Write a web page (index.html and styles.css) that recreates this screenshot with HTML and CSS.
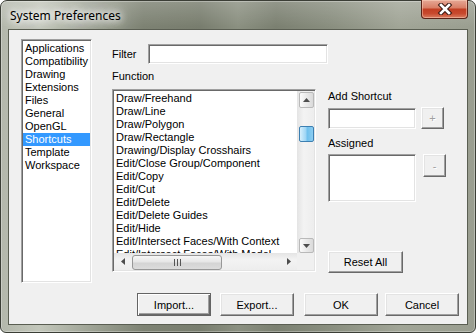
FILE: index.html
```html
<!DOCTYPE html>
<html lang="en">
<head>
  <meta charset="UTF-8">
  <link rel="stylesheet" href="styles.css">
  <title>System Preferences</title>
</head>
<body>
  <div class="window">
    <div class="titlebar">
      <span class="title">System Preferences</span>
      <div class="close-btn">
        <svg width="16" height="12" viewBox="0 0 16 12">
          <path d="M4 2 L12 10 M12 2 L4 10" stroke="#3a1a14" stroke-width="4.6" stroke-linecap="square" fill="none"/>
          <path d="M4 2 L12 10 M12 2 L4 10" stroke="#ffffff" stroke-width="2.6" stroke-linecap="square" fill="none"/>
        </svg>
      </div>
    </div>

    <div class="client">
      <div class="main">
        <div class="listbox sunken pages">
          <div class="item">Applications</div>
          <div class="item">Compatibility</div>
          <div class="item">Drawing</div>
          <div class="item">Extensions</div>
          <div class="item">Files</div>
          <div class="item">General</div>
          <div class="item">OpenGL</div>
          <div class="item selected">Shortcuts</div>
          <div class="item">Template</div>
          <div class="item">Workspace</div>
        </div>

        <div class="content">
          <div class="filter-row">
            <span class="filter-label">Filter</span>
            <div class="sunken filter-box"></div>
          </div>

          <div class="lower">
            <div class="func-col">
              <div class="label">Function</div>
              <div class="sunken functions">
                <div class="func-items">
                  <div class="item">Draw/Freehand</div>
                  <div class="item">Draw/Line</div>
                  <div class="item">Draw/Polygon</div>
                  <div class="item">Draw/Rectangle</div>
                  <div class="item">Drawing/Display Crosshairs</div>
                  <div class="item">Edit/Close Group/Component</div>
                  <div class="item">Edit/Copy</div>
                  <div class="item">Edit/Cut</div>
                  <div class="item">Edit/Delete</div>
                  <div class="item">Edit/Delete Guides</div>
                  <div class="item">Edit/Hide</div>
                  <div class="item">Edit/Intersect Faces/With Context</div>
                  <div class="item">Edit/Intersect Faces/With Model</div>
                </div>
                <div class="vscroll">
                  <div class="sb-btn sb-up">
                    <svg width="7" height="4" viewBox="0 0 7 4"><path d="M0 4 L3.5 0 L7 4 Z" fill="#4d4d4d"/></svg>
                  </div>
                  <div class="vthumb"></div>
                  <div class="sb-btn sb-down">
                    <svg width="7" height="4" viewBox="0 0 7 4"><path d="M0 0 L3.5 4 L7 0 Z" fill="#4d4d4d"/></svg>
                  </div>
                </div>
                <div class="hscroll">
                  <div class="harrow">
                    <svg width="4" height="7" viewBox="0 0 4 7"><path d="M4 0 L0 3.5 L4 7 Z" fill="#4d4d4d"/></svg>
                  </div>
                  <div class="hthumb">
                    <svg width="7" height="7" viewBox="0 0 7 7"><path d="M0.5 0 V7 M3.5 0 V7 M6.5 0 V7" stroke="#555" stroke-width="1"/></svg>
                  </div>
                  <div class="harrow right">
                    <svg width="4" height="7" viewBox="0 0 4 7"><path d="M0 0 L4 3.5 L0 7 Z" fill="#4d4d4d"/></svg>
                  </div>
                </div>
                <div class="corner"></div>
              </div>
            </div>

            <div class="side-col">
              <div class="label">Add Shortcut</div>
              <div class="input-row">
                <div class="sunken shortcut-box"></div>
                <div class="btn small">+</div>
              </div>
              <div class="label assigned-label">Assigned</div>
              <div class="input-row assigned-row">
                <div class="sunken assigned-box"></div>
                <div class="btn small minus">-</div>
              </div>
              <div class="btn reset">Reset All</div>
            </div>
          </div>
        </div>
      </div>

      <div class="actions">
        <div class="btn action default">Import...</div>
        <div class="btn action">Export...</div>
        <div class="btn action ok">OK</div>
        <div class="btn action cancel">Cancel</div>
      </div>
    </div>
  </div>
</body>
</html>
```

FILE: styles.css
```css
body {
  margin: 0;
  background: #ffffff;
  font-family: "Liberation Sans", Arial, sans-serif;
  font-size: 11px;
  color: #000;
}

/* window frame */
.window {
  width: 476px;
  height: 333px;
  box-sizing: border-box;
  border: 1px solid #3b3e36;
  border-radius: 7px 7px 6px 6px;
  padding: 0 7px 7px;
  display: flex;
  flex-direction: column;
  background:
    linear-gradient(rgba(255, 255, 255, 0.18), rgba(255, 255, 255, 0) 26px),
    linear-gradient(90deg, #b3b7ab 0%, #c3c7bb 8%, #9ba092 20%, #7d8273 30%, #787d6e 42%, #8b9081 50%, #7b8071 58%, #8a8f80 70%, #a1a597 84%, #9a9e90 100%);
  box-shadow: inset 0 0 0 1px rgba(255, 255, 255, 0.3);
}

.titlebar {
  height: 28px;
  display: flex;
  justify-content: space-between;
  align-items: flex-start;
}
.title {
  margin: 7px 0 0 2px;
  font-family: "Noto Sans", "Open Sans", sans-serif;
  font-size: 12px;
  line-height: 15px;
  color: #000;
  text-shadow: 0 0 6px #fff, 0 0 10px #fff, 0 0 14px #fff, 0 0 18px #fff;
}
.close-btn {
  width: 45px;
  height: 18px;
  margin: -1px 0 0 0;
  border: 1px solid #5a2318;
  border-top: none;
  border-radius: 0 0 4px 4px;
  display: flex;
  align-items: center;
  justify-content: center;
  background: linear-gradient(#e6a896 0%, #d98068 42%, #c23f24 52%, #c8492e 75%, #d97c60 100%);
  box-shadow: inset 0 0 0 1px rgba(255, 220, 200, 0.45);
}

/* client area */
.client {
  flex: 1;
  border: 1px solid #5a5e52;
  background: #f0f0f0;
  padding: 9px 8px 8px 12px;
  display: flex;
  flex-direction: column;
}
.main {
  height: 244px;
  display: flex;
}

.sunken {
  box-sizing: border-box;
  background: #fff;
  border: 1px solid;
  border-color: #a0a0a0 #ffffff #ffffff #a0a0a0;
  box-shadow: inset 1px 1px 0 #696969, inset -1px -1px 0 #e3e3e3;
}

.item {
  line-height: 13px;
  padding-left: 2px;
  white-space: nowrap;
}

.pages {
  width: 71px;
  height: 244px;
  padding: 2px 1px 1px;
}
.pages .selected {
  background: #3399ff;
  color: #fff;
}

.content {
  margin-left: 20px;
}
.filter-row {
  margin-top: 5px;
  height: 20px;
  display: flex;
  align-items: center;
}
.filter-label {
  width: 36px;
}
.filter-box {
  width: 180px;
  height: 20px;
}

.lower {
  display: flex;
}
.label {
  line-height: 13px;
  white-space: nowrap;
}
.func-col {
  width: 204px;
}
.func-col .label {
  margin-top: 6px;
}

/* function list with scrollbars */
.functions {
  margin-top: 6px;
  height: 183px;
  padding: 1px;
  display: grid;
  grid-template-columns: 1fr 17px;
  grid-template-rows: 1fr 17px;
}
.func-items {
  overflow: hidden;
  padding-top: 1px;
}
.vscroll {
  display: flex;
  flex-direction: column;
  background: linear-gradient(90deg, #e4e4e4, #f3f3f3 40%, #ededed);
}
.sb-btn {
  box-sizing: border-box;
  margin-left: 2px;
  width: 15px;
  border: 1px solid #b9b9b9;
  border-radius: 2px;
  background: linear-gradient(90deg, #fbfbfb, #e9e9e9 50%, #dadada);
  display: flex;
  align-items: center;
  justify-content: center;
}
.sb-up {
  height: 16px;
  margin-top: 1px;
}
.sb-down {
  height: 15px;
  margin-top: auto;
}
.vthumb {
  box-sizing: border-box;
  margin: 18px 0 0 2px;
  width: 15px;
  height: 16px;
  border: 1px solid #3c7fb1;
  border-radius: 2px;
  background: linear-gradient(90deg, #d6effc, #9dd5f5 45%, #6fc0ed 55%, #8ccdf1);
}
.hscroll {
  display: flex;
  align-items: center;
  background: linear-gradient(#e4e4e4, #f3f3f3 40%, #ededed);
}
.harrow {
  width: 17px;
  display: flex;
  justify-content: center;
}
.harrow.right {
  margin-left: auto;
}
.hthumb {
  box-sizing: border-box;
  margin: 2px 0 0 1px;
  width: 90px;
  height: 15px;
  border: 1px solid #979797;
  border-radius: 3px;
  background: linear-gradient(#f7f7f7, #e6e6e6 45%, #d4d4d4 55%, #dcdcdc);
  display: flex;
  align-items: center;
  justify-content: center;
}
.corner {
  background: #f0f0f0;
}

/* right column */
.side-col {
  margin-left: 12px;
  display: flex;
  flex-direction: column;
}
.side-col .label {
  margin-top: 26px;
}
.side-col .assigned-label {
  margin-top: 8px;
}
.input-row {
  margin-top: 5px;
  display: flex;
  align-items: flex-start;
  gap: 5px;
}
.assigned-row {
  margin-top: 4px;
  gap: 7px;
}
.shortcut-box {
  width: 88px;
  height: 21px;
}
.assigned-box {
  width: 88px;
  height: 48px;
}

/* classic raised buttons */
.btn {
  box-sizing: border-box;
  background: #f0f0f0;
  border: 1px solid;
  border-color: #ffffff #696969 #696969 #ffffff;
  box-shadow: inset -1px -1px 0 #a0a0a0, inset 1px 1px 0 #e3e3e3;
  display: flex;
  align-items: center;
  justify-content: center;
  white-space: nowrap;
}
.btn.small {
  width: 23px;
  height: 22px;
  margin-top: -1px;
  color: #a0a0a0;
  text-shadow: 1px 1px 0 #fff;
}
.btn.minus {
  height: 23px;
  margin-top: 0;
}
.btn.reset {
  margin-top: 49px;
  width: 75px;
  height: 22px;
}

.actions {
  margin-top: 10px;
  display: flex;
  justify-content: flex-end;
  gap: 9px;
}
.btn.action {
  width: 74px;
  height: 23px;
}
.btn.ok {
  margin-left: 1px;
}
.btn.cancel {
  margin-left: -2px;
}
.btn.default {
  border-color: #646464;
  box-shadow: inset 1px 1px 0 #fff, inset -1px -1px 0 #696969, inset -2px -2px 0 #a0a0a0;
}
```
